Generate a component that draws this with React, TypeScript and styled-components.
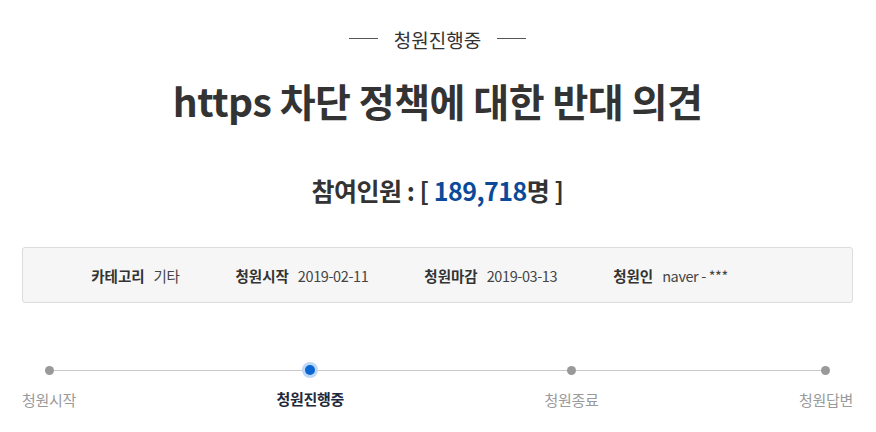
import styled, { createGlobalStyle } from "styled-components"

const GlobalStyle = createGlobalStyle`
    body {
        margin: 0;
        background: #ffffff;
        font-family: "Noto Sans CJK KR", "Noto Sans", sans-serif;
        color: #333333;
    }
`

const PageStyle = styled.div`
    width: 831px;
    margin-left: 22px;
    padding-top: 27px;
`

const StatusStyle = styled.div`
    display: flex;
    align-items: center;
    justify-content: center;
    gap: 16px;
    font-size: 19px;
    line-height: 26px;
    color: #333333;

    &::before,
    &::after {
        content: "";
        width: 29px;
        height: 1px;
        margin-top: -3px;
        background: #555555;
    }
`

const TitleStyle = styled.h1`
    margin: 21px 0 0;
    text-align: center;
    font-size: 39px;
    line-height: 52px;
    font-weight: 700;
    color: #333333;
    letter-spacing: -0.5px;
`

const CountStyle = styled.div`
    margin-top: 47px;
    text-align: center;
    font-size: 25px;
    line-height: 34px;
    font-weight: 700;
    color: #333333;
    letter-spacing: -0.5px;
`

const CountNumberStyle = styled.span`
    color: #0b4a9b;
`

const InfoBoxStyle = styled.div`
    margin-top: 40px;
    height: 54px;
    display: flex;
    align-items: center;
    justify-content: center;
    background: #f6f6f6;
    border: 1px solid #dcdcdc;
    border-radius: 3px;
`

const InfoItemStyle = styled.div`
    display: flex;
    align-items: baseline;
    gap: 9px;
    margin-right: 56px;
    font-size: 14.5px;
`

const InfoLabelStyle = styled.span`
    font-weight: 700;
    color: #333333;
`

const InfoValueStyle = styled.span`
    color: #444444;
    letter-spacing: -0.4px;
`

const StepsStyle = styled.ul`
    position: relative;
    display: flex;
    justify-content: space-between;
    margin: 62px 0 0;
    padding: 0;
    list-style: none;
`

const TrackStyle = styled.div`
    position: absolute;
    top: 5px;
    left: 27px;
    right: 28px;
    height: 1px;
    background: #c8c8c8;
`

const StepStyle = styled.li`
    position: relative;
    display: flex;
    flex-direction: column;
    align-items: center;
    gap: 14px;
`

const DotStyle = styled.span<{ $active?: boolean }>`
    width: ${(p) => (p.$active ? 10 : 9)}px;
    height: ${(p) => (p.$active ? 10 : 9)}px;
    margin-top: ${(p) => (p.$active ? 0 : 1)}px;
    border-radius: 50%;
    background: ${(p) => (p.$active ? "#0a66d0" : "#999999")};
    box-shadow: ${(p) => (p.$active ? "0 0 0 3px #bcd8f6" : "none")};
`

const StepLabelStyle = styled.span<{ $active?: boolean }>`
    font-size: 15px;
    line-height: 20px;
    margin-top: ${(p) => (p.$active ? 0 : 1)}px;
    font-weight: ${(p) => (p.$active ? 700 : 400)};
    color: ${(p) => (p.$active ? "#1e2a3c" : "#9a9a9a")};
    letter-spacing: -0.3px;
`

const info = [
    { label: "카테고리", value: "기타" },
    { label: "청원시작", value: "2019-02-11" },
    { label: "청원마감", value: "2019-03-13" },
    { label: "청원인", value: "naver - ***" },
]

const steps = [
    { label: "청원시작", active: false },
    { label: "청원진행중", active: true },
    { label: "청원종료", active: false },
    { label: "청원답변", active: false },
]

export default function App() {
    return (
        <>
            <GlobalStyle />
            <PageStyle>
                <StatusStyle>청원진행중</StatusStyle>
                <TitleStyle>https 차단 정책에 대한 반대 의견</TitleStyle>
                <CountStyle>
                    참여인원 : [ <CountNumberStyle>189,718</CountNumberStyle>명 ]
                </CountStyle>
                <InfoBoxStyle>
                    {info.map((item) => (
                        <InfoItemStyle key={item.label}>
                            <InfoLabelStyle>{item.label}</InfoLabelStyle>
                            <InfoValueStyle>{item.value}</InfoValueStyle>
                        </InfoItemStyle>
                    ))}
                </InfoBoxStyle>
                <StepsStyle>
                    <TrackStyle />
                    {steps.map((step) => (
                        <StepStyle key={step.label}>
                            <DotStyle $active={step.active} />
                            <StepLabelStyle $active={step.active}>{step.label}</StepLabelStyle>
                        </StepStyle>
                    ))}
                </StepsStyle>
            </PageStyle>
        </>
    )
}
